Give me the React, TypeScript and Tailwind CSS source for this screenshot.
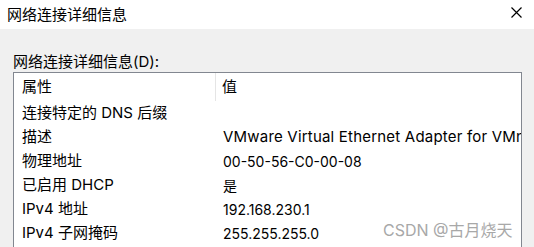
import React from "react";

const rows: [string, string, string][] = [
  ["连接特定的 DNS 后缀", "", "text-[14px]"],
  ["描述", "VMware Virtual Ethernet Adapter for VMnet1", "text-[15px] tracking-[0.2px]"],
  ["物理地址", "00-50-56-C0-00-08", "text-[14px]"],
  ["已启用 DHCP", "是", "text-[14px]"],
  ["IPv4 地址", "192.168.230.1", "text-[14px]"],
  ["IPv4 子网掩码", "255.255.255.0", "text-[14px]"],
];

export default function App() {
  return (
    <div
      className="relative w-[534px] h-[247px] overflow-hidden bg-[#f0f0f0] text-[15px] text-black"
      style={{ fontFamily: 'Inter, "Noto Sans CJK SC", sans-serif' }}
    >
      <div className="h-[29px] bg-white flex items-center justify-between pl-[7px] pr-[12px]">
        <span className="leading-[20px]">网络连接详细信息</span>
        <svg width="11" height="11" viewBox="0 0 11 11" className="mt-[-4px]">
          <path d="M0.5 0.5 L10.5 10.5 M10.5 0.5 L0.5 10.5" stroke="#000" strokeWidth="1.2" fill="none" />
        </svg>
      </div>
      <div className="pl-[13px] pr-[12px] pt-[23px]">
        <div className="leading-[20px] h-[20px]">网络连接详细信息(D):</div>
        <div className="border border-[#828790] bg-white h-[200px] overflow-hidden">
          <div className="flex h-[28px] items-center">
            <div className="w-[202px] pl-[8px] h-full flex items-center border-r border-[#e5e5e5] box-border">属性</div>
            <div className="pl-[6px]">值</div>
          </div>
          {rows.map(([k, v, cls]) => (
            <div key={k} className="flex h-[24px] items-center whitespace-nowrap">
              <div className="w-[202px] pl-[8px] shrink-0">{k}</div>
              <div className={"pl-[7px] " + cls}>{v}</div>
            </div>
          ))}
        </div>
      </div>
      <div className="absolute left-[383px] top-[219px] text-[16px] leading-[22px] text-[#a8a8a8]">
        CSDN @古月烧天
      </div>
    </div>
  );
}
